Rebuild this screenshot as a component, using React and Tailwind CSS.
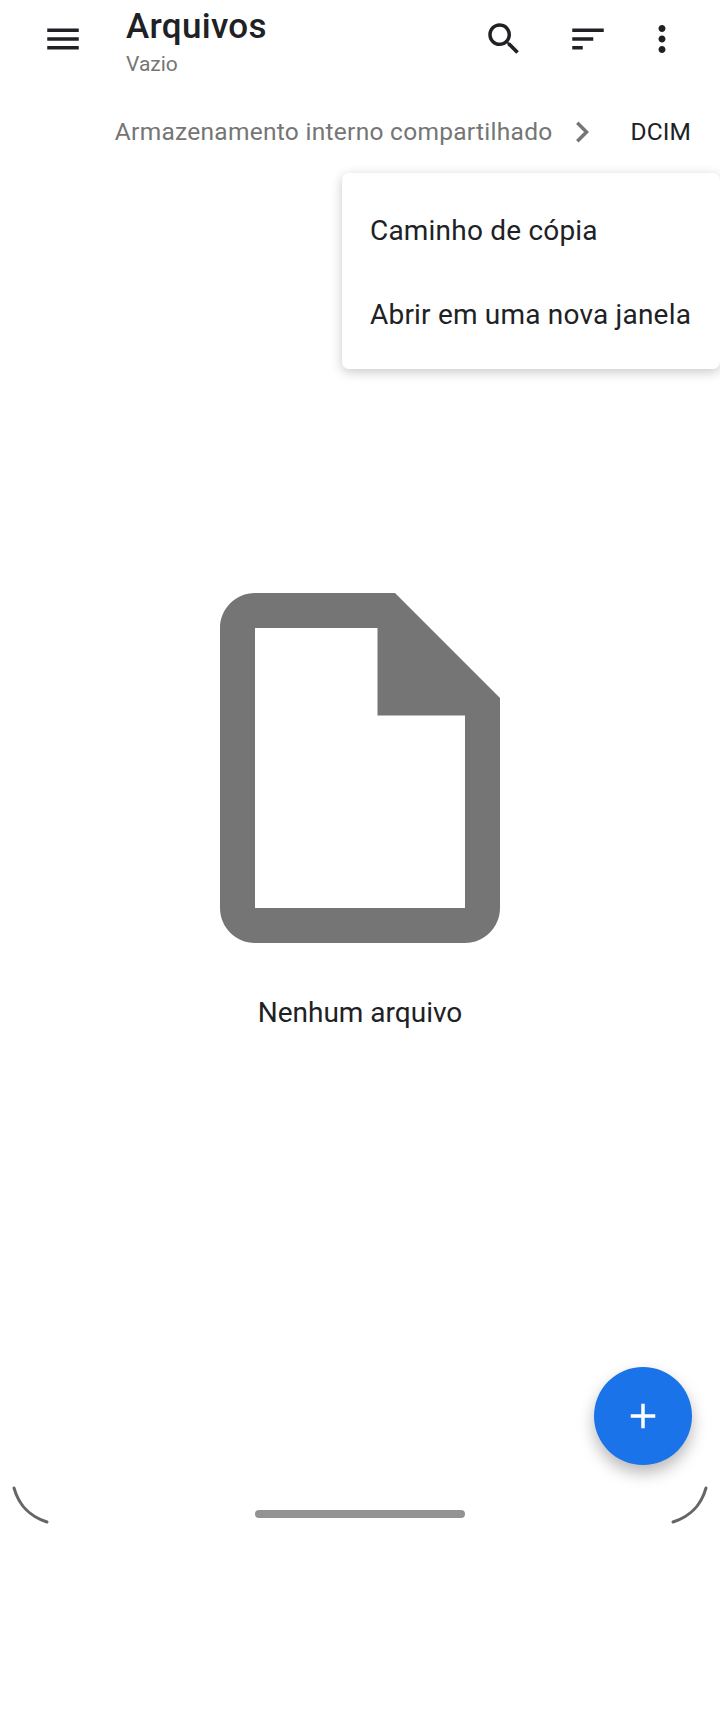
import React from 'react';

// Material icon paths, 24 unit grid
const MaterialIcon = ({ d, className }) => (
    <svg className={className} viewBox="0 0 24 24" fill="currentColor">
        <path d={d} />
    </svg>
);

const ICONS = {
    menu: 'M3 18h18v-2H3v2zm0-5h18v-2H3v2zm0-7v2h18V6H3z',
    search: 'M15.5 14h-.79l-.28-.27C15.41 12.59 16 11.11 16 9.5 16 5.91 13.09 3 9.5 3S3 5.91 3 9.5 5.91 16 9.5 16c1.61 0 3.09-.59 4.23-1.57l.27.28v.79l5 4.99L20.49 19l-4.99-5zm-6 0C7.01 14 5 11.99 5 9.5S7.01 5 9.5 5 14 7.01 14 9.5 11.99 14 9.5 14z',
    sort: 'M3 18h6v-2H3v2zM3 6v2h18V6H3zm0 7h12v-2H3v2z',
    more: 'M12 8c1.1 0 2-.9 2-2s-.9-2-2-2-2 .9-2 2 .9 2 2 2zm0 2c-1.1 0-2 .9-2 2s.9 2 2 2 2-.9 2-2-.9-2-2-2zm0 6c-1.1 0-2 .9-2 2s.9 2 2 2 2-.9 2-2-.9-2-2-2z',
    chevron: 'M10 6L8.59 7.41 13.17 12l-4.58 4.59L10 18l6-6z',
    file: 'M14 2H6c-1.1 0-2 .9-2 2v16c0 1.1.9 2 2 2h12c1.1 0 2-.9 2-2V8l-6-6zM6 20V4h7v5h5v11H6z',
    plus: 'M19 13h-6v6h-2v-6H5v-2h6V5h2v6h6v2z',
};

export default function App() {
    return (
        <div className="relative flex h-[1712px] w-[720px] flex-col overflow-hidden bg-white font-['Roboto',sans-serif] text-[#202124]">
            {/* Toolbar */}
            <div className="flex h-[77px] items-start">
                <div className="flex h-[77px] w-[126px] items-center pl-[42px]">
                    <MaterialIcon d={ICONS.menu} className="h-[42px] w-[42px]" />
                </div>
                <div className="flex-1">
                    <h1 className="mt-[7px] text-[35px] font-medium leading-[40px] tracking-[0.3px]">Arquivos</h1>
                    <p className="mt-[5px] text-[21px] leading-[24px] text-[#757575]">Vazio</p>
                </div>
                <div className="flex h-[77px] items-center pr-[37px]">
                    <MaterialIcon d={ICONS.search} className="h-[42px] w-[42px]" />
                    <MaterialIcon d={ICONS.sort} className="ml-[42px] h-[42px] w-[42px]" />
                    <MaterialIcon d={ICONS.more} className="ml-[32px] h-[42px] w-[42px]" />
                </div>
            </div>

            {/* Breadcrumb */}
            <div className="mt-[34px] flex h-[42px] items-center justify-end pr-[29px] text-[24.5px]">
                <span className="tracking-[0.28px] text-[#757575]">Armazenamento interno compartilhado</span>
                <MaterialIcon d={ICONS.chevron} className="ml-[8px] h-[42px] w-[42px] text-[#757575]" />
                <span className="ml-[28px] tracking-[0.1px]">DCIM</span>
            </div>

            {/* Empty state */}
            <div className="flex flex-col items-center">
                <MaterialIcon d={ICONS.file} className="mt-[405px] h-[420px] w-[420px] text-[#757575]" />
                <p className="mt-[15px] text-[28px] leading-[40px]">Nenhum arquivo</p>
            </div>

            {/* Overflow menu */}
            <div className="absolute left-[342px] top-[173px] w-[378px] rounded-[7px] bg-white py-[14px] shadow-[0_3px_12px_rgba(0,0,0,0.22)]">
                <div className="flex h-[84px] items-center pl-[28px] pt-[4px] text-[28px] tracking-[0.2px]">Caminho de cópia</div>
                <div className="flex h-[84px] items-center pl-[28px] pt-[4px] text-[28px] tracking-[0.2px]">Abrir em uma nova janela</div>
            </div>

            {/* FAB */}
            <button className="absolute left-[594px] top-[1367px] flex h-[98px] w-[98px] items-center justify-center rounded-full bg-[#1a73e8] text-white shadow-[0_8px_16px_rgba(0,0,0,0.28)]">
                <MaterialIcon d={ICONS.plus} className="h-[42px] w-[42px]" />
            </button>

            {/* Gesture bar */}
            <div className="absolute left-[255px] top-[1510px] h-[8px] w-[210px] rounded-full bg-[#939393]" />

            {/* Screen corners */}
            <svg className="absolute left-[10px] top-[1484px] h-[42px] w-[42px]" viewBox="0 0 42 42" fill="none" stroke="#666666" strokeWidth="3" strokeLinecap="round">
                <path d="M4 4C8 18 16 31 37 38" />
            </svg>
            <svg className="absolute left-[668px] top-[1484px] h-[42px] w-[42px]" viewBox="0 0 42 42" fill="none" stroke="#666666" strokeWidth="3" strokeLinecap="round">
                <path d="M38 4C34 18 26 31 5 38" />
            </svg>
        </div>
    );
}
